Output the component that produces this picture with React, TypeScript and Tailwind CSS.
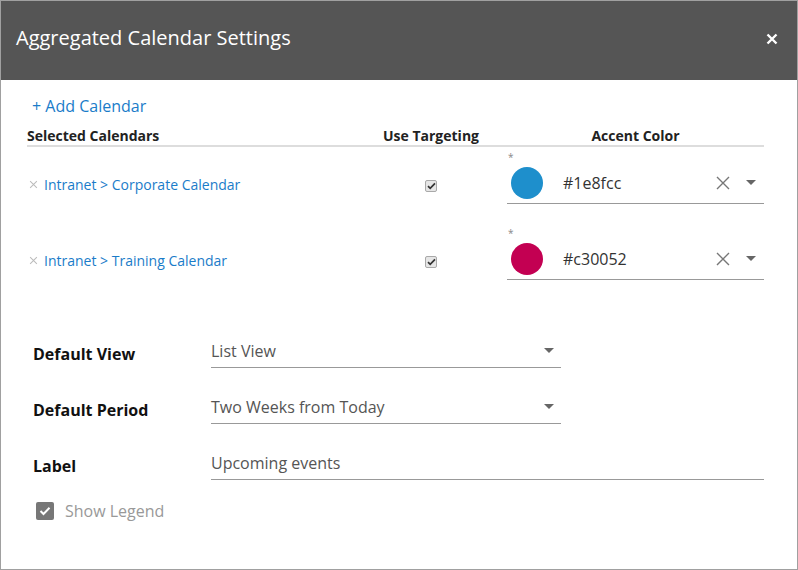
import { useState } from "react";

const Caret = () => (
  <svg width="10" height="5" viewBox="0 0 10 5" className="block">
    <path d="M0 0h10L5 5z" fill="#666" />
  </svg>
);

const ClearX = ({ size = 15, color = "#777", stroke = 1.4 }: { size?: number; color?: string; stroke?: number }) => (
  <svg width={size} height={size} viewBox="0 0 16 16" className="block">
    <path d="M2 2l12 12M14 2L2 14" stroke={color} strokeWidth={stroke} fill="none" />
  </svg>
);

const SmallCheck = () => (
  <div className="w-[12px] h-[12px] rounded-[2px] border border-[#a9a9a9] bg-[#e6e6e6] flex items-center justify-center">
    <svg width="9" height="8" viewBox="0 0 9 8">
      <path d="M1 4.2l2.2 2.2L8 1.3" stroke="#333" strokeWidth="1.7" fill="none" />
    </svg>
  </div>
);

const calendars = [
  { name: "Intranet > Corporate Calendar", color: "#1e8fcc" },
  { name: "Intranet > Training Calendar", color: "#c30052" },
];

export default function App() {
  const [label, setLabel] = useState("Upcoming events");

  return (
    <div className="w-[798px] h-[570px] border border-[#a0a0a0] bg-white flex flex-col font-['Open_Sans',sans-serif] text-[#333]">
      {/* Header */}
      <div className="h-[79px] bg-[#555555] flex items-center justify-between pl-[15px] pr-[19px] shrink-0">
        <h1 className="text-[20px] text-white leading-none -mt-[5px]">Aggregated Calendar Settings</h1>
        <svg width="12" height="12" viewBox="0 0 12 12" className="-mt-[3px]">
          <path d="M1.5 1.5l9 9M10.5 1.5l-9 9" stroke="#fff" strokeWidth="2.4" fill="none" />
        </svg>
      </div>

      <div className="pl-[26px] pr-[33px]">
        <div className="pt-[14px] pl-[5px] h-[47px]">
          <a className="text-[16px] leading-[24px] text-[#1a7cc9] cursor-pointer">+ Add Calendar</a>
        </div>

        {/* Calendars table */}
        <div className="flex border-b-2 border-[#dddddd] h-[20px] text-[14px] font-bold text-[#222] leading-[18px]">
          <div className="w-[328px]">Selected Calendars</div>
          <div className="w-[152px] text-center">Use Targeting</div>
          <div className="flex-1 text-center">Accent Color</div>
        </div>

        {calendars.map((c) => (
          <div key={c.name} className="flex h-[76px]">
            <div className="w-[328px] flex items-start pt-[28px] pl-[2px] gap-[6px]">
              <div className="pt-[5px]">
                <ClearX size={9} color="#bbb" stroke={1.8} />
              </div>
              <a className="text-[14px] leading-[20px] text-[#1a7cc9] cursor-pointer">{c.name}</a>
            </div>
            <div className="w-[152px] flex justify-center pt-[33px]">
              <SmallCheck />
            </div>
            <div className="flex-1 pt-[5px]">
              <div className="h-[12px] text-[10px] leading-[10px] text-[#888] pl-[1px]">*</div>
              <div className="h-[40px] flex items-center border-b border-[#999] pl-[4px] pr-[8px] pb-[2px]">
                <div className="w-[32px] h-[32px] rounded-full shrink-0" style={{ backgroundColor: c.color }} />
                <span className="ml-[20px] text-[16px] text-[#333] flex-1">{c.color}</span>
                <ClearX size={16} />
                <div className="ml-[15px]">
                  <Caret />
                </div>
              </div>
            </div>
          </div>
        ))}

        {/* Settings form */}
        <div className="mt-[35px] pl-[6px] flex flex-col gap-[22px]">
          {[
            { label: "Default View", value: "List View" },
            { label: "Default Period", value: "Two Weeks from Today" },
          ].map((row) => (
            <div key={row.label} className="flex h-[34px]">
              <div className="w-[178px] pt-[9px] text-[16px] font-bold text-[#111] leading-[22px]">{row.label}</div>
              <div className="w-[350px] h-[34px] border-b border-[#999] flex items-center justify-between pr-[7px]">
                <span className="text-[16px] text-[#555]">{row.value}</span>
                <Caret />
              </div>
            </div>
          ))}
          <div className="flex h-[34px]">
            <div className="w-[178px] pt-[9px] text-[16px] font-bold text-[#111] leading-[22px]">Label</div>
            <input
              value={label}
              onChange={(e) => setLabel(e.target.value)}
              className="flex-1 h-[34px] border-b border-[#999] text-[16px] text-[#555] outline-none"
            />
          </div>
        </div>

        <div className="mt-[19px] pl-[9px] flex items-center gap-[11px]">
          <div className="w-[18px] h-[18px] rounded-[2px] bg-[#777] flex items-center justify-center">
            <svg width="12" height="10" viewBox="0 0 12 10">
              <path d="M1.5 5l3 3L10.5 1.8" stroke="#fff" strokeWidth="2" fill="none" />
            </svg>
          </div>
          <span className="text-[16px] text-[#999]">Show Legend</span>
        </div>
      </div>
    </div>
  );
}
